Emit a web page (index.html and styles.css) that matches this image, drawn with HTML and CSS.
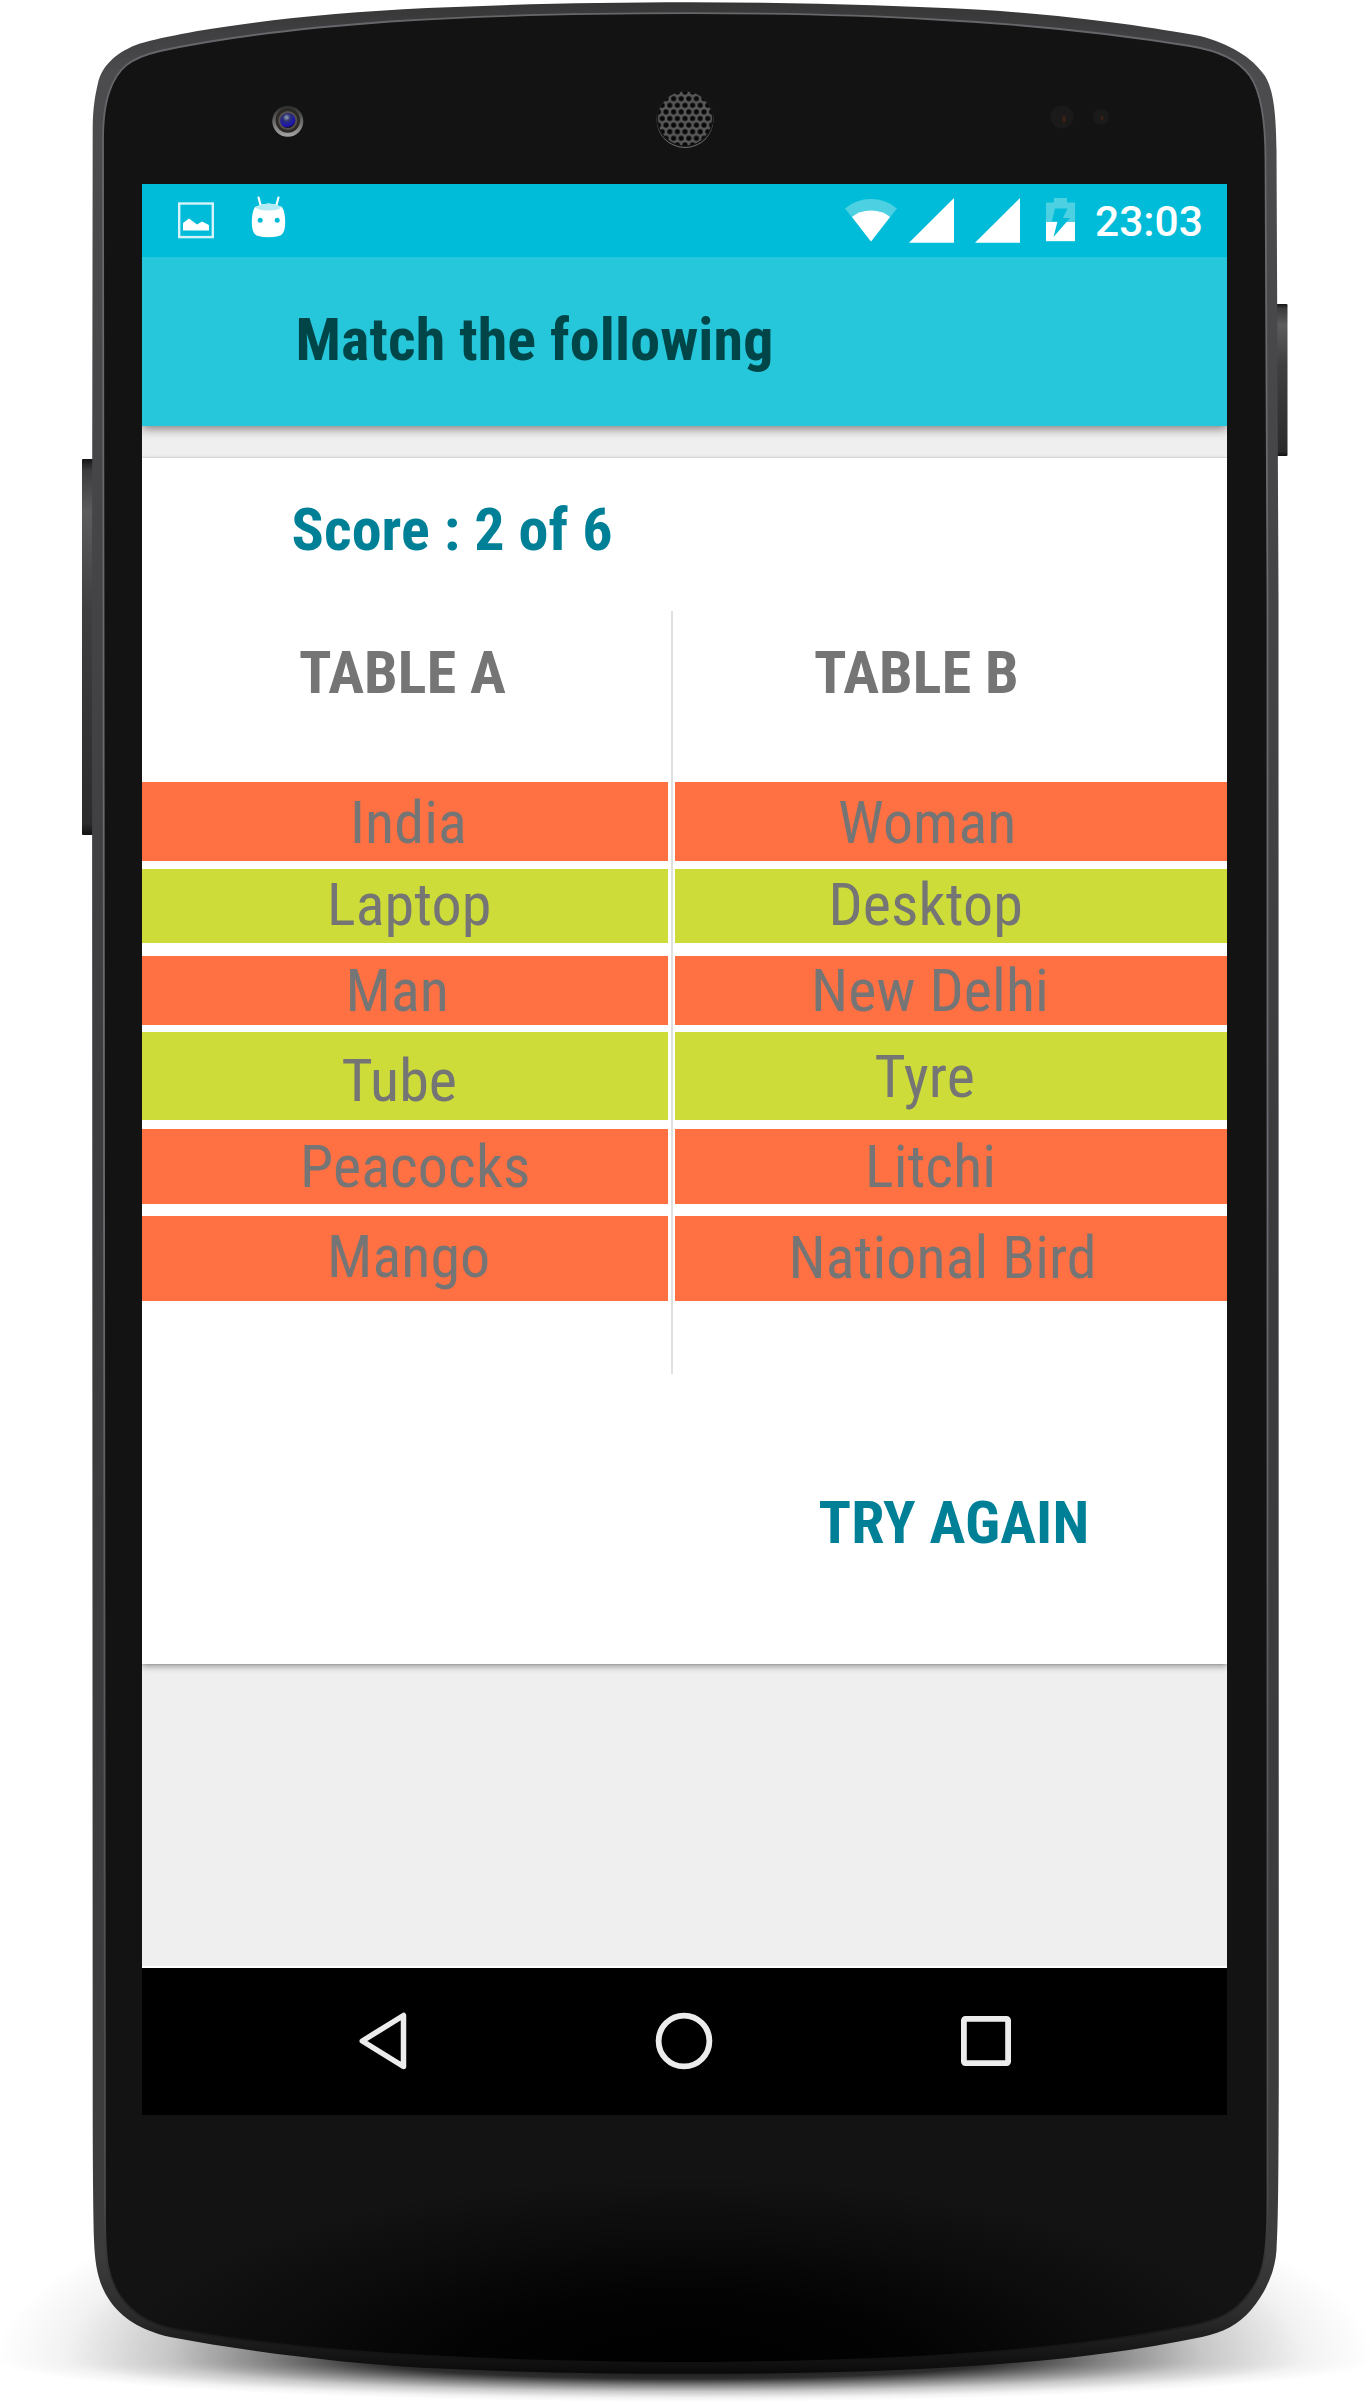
FILE: index.html
```
<!DOCTYPE html>
<html lang="en">
<head>
<meta charset="utf-8">
<title>Match the following</title>
<link rel="stylesheet" href="styles.css">
</head>
<body>
<div class="device">
  <svg class="device-frame" viewBox="0 0 1370 2405" aria-hidden="true">
    <defs>
      <radialGradient id="floor" cx=".5" cy=".5" r=".5">
        <stop offset="0" stop-color="#000" stop-opacity="1"/>
        <stop offset=".45" stop-color="#000" stop-opacity=".82"/>
        <stop offset=".6" stop-color="#000" stop-opacity=".5"/>
        <stop offset=".75" stop-color="#000" stop-opacity=".22"/>
        <stop offset=".9" stop-color="#000" stop-opacity=".05"/>
        <stop offset="1" stop-color="#000" stop-opacity="0"/>
      </radialGradient>
      <linearGradient id="rim" x1="0" y1="0" x2="0" y2="1">
        <stop offset="0" stop-color="#363637"/>
        <stop offset=".03" stop-color="#4c4c4f"/>
        <stop offset=".5" stop-color="#3b3b3e"/>
        <stop offset=".95" stop-color="#3c3c3d"/>
        <stop offset=".975" stop-color="#2c2c2c"/>
        <stop offset="1" stop-color="#0a0a0a"/>
      </linearGradient>
      <linearGradient id="edge" x1="0" y1="0" x2="0" y2="1">
        <stop offset="0" stop-color="#66666a"/>
        <stop offset=".5" stop-color="#6a6a70"/>
        <stop offset=".93" stop-color="#4a4a4c"/>
        <stop offset="1" stop-color="#101010"/>
      </linearGradient>
      <radialGradient id="shade" gradientUnits="userSpaceOnUse" cx="0" cy="0" r="1" gradientTransform="translate(685 2370) scale(580 195)">
        <stop offset="0" stop-color="#000"/>
        <stop offset=".4" stop-color="#000" stop-opacity=".85"/>
        <stop offset=".7" stop-color="#000" stop-opacity=".4"/>
        <stop offset="1" stop-color="#000" stop-opacity="0"/>
      </radialGradient>
      <linearGradient id="key" x1="0" y1="0" x2="0" y2="1">
        <stop offset="0" stop-color="#151515"/>
        <stop offset=".03" stop-color="#3c3c3c"/>
        <stop offset=".14" stop-color="#5c5c5c"/>
        <stop offset=".4" stop-color="#3f3f3f"/>
        <stop offset=".97" stop-color="#2b2b2b"/>
        <stop offset="1" stop-color="#111"/>
      </linearGradient>
      <linearGradient id="bezel" x1="0" y1="0" x2="0" y2="1">
        <stop offset="0" stop-color="#2a2a2a"/>
        <stop offset="1" stop-color="#a5a5a5"/>
      </linearGradient>
      <radialGradient id="lens" cx=".42" cy=".3" r=".7">
        <stop offset="0" stop-color="#9aa4b8"/>
        <stop offset=".35" stop-color="#2c3270"/>
        <stop offset=".8" stop-color="#1d12b8"/>
        <stop offset="1" stop-color="#111"/>
      </radialGradient>
      <pattern id="mesh" width="7.6" height="13.2" patternUnits="userSpaceOnUse" patternTransform="translate(681.2 111.9)">
        <rect width="7.6" height="13.2" fill="#585858"/>
        <circle cx="3.8" cy="6.6" r="2.6" fill="#090909"/>
        <circle cx="0" cy="0" r="2.6" fill="#090909"/>
        <circle cx="7.6" cy="0" r="2.6" fill="#090909"/>
        <circle cx="0" cy="13.2" r="2.6" fill="#090909"/>
        <circle cx="7.6" cy="13.2" r="2.6" fill="#090909"/>
      </pattern>
      <clipPath id="above"><rect x="0" y="2150" width="1370" height="210"/></clipPath>
      <clipPath id="below"><rect x="0" y="2360" width="1370" height="45"/></clipPath>
    </defs>
    <g clip-path="url(#above)"><ellipse cx="685" cy="2360" rx="690" ry="205" fill="url(#floor)"/></g>
    <g clip-path="url(#below)"><ellipse cx="685" cy="2360" rx="690" ry="42" fill="url(#floor)"/></g>
    <rect x="82" y="459" width="14" height="376" rx="1" fill="url(#key)"/>
    <rect x="1272" y="304" width="15.500" height="152" rx="1" fill="url(#key)"/>
    <path fill="url(#rim)" d="M92 600 L92.700 127 C93 107 95 96 98 83 C102 65 118 51 140 43.500 C190 29 300 14 427 8 C520 4 600 2.200 690 2.200 C790 2.200 890 5 976 9.500 C1070 15 1150 27 1200 36 C1230 44 1252 57 1265 76 C1272 88 1276 105 1276.500 150 L1278.500 600 L1278.800 2080 C1278.500 2160 1278.500 2220 1276.500 2250 C1275 2272 1266 2292 1251 2310 C1238 2325 1224 2332 1202 2337 C1130 2352 1060 2360 986 2365 C890 2372 790 2373.800 690 2373.800 C590 2373.800 510 2372 427 2368 C340 2363 250 2352 170 2337 C140 2330 122 2318 110 2301 C98 2284 95 2265 94 2240 C93 2200 92.700 2150 92.700 2080 Z"/>
    <path fill="#131313" stroke="url(#edge)" stroke-width="1.800" d="M103.500 600 L103 140 C103 120 105 103 110 90 C118 68 130 58 160 51 C220 38 300 28 390 21.500 C490 15 590 13.200 690 13.200 C780 13.200 860 15 935 19.500 C1020 24 1110 33 1190 46 C1220 51 1238 60 1250 76 C1261 92 1265.500 120 1265.500 160 L1267.500 600 L1267.500 2200 C1267.500 2255 1263 2276 1250 2292 C1236 2312 1220 2320 1190 2326 C1090 2346 940 2362 690 2363 C440 2362 280 2349 174 2329 C146 2323 132 2312 120 2296 C108 2278 105.500 2262 105 2220 Z"/>
    <path fill="url(#shade)" d="M107 2170 H1266 V2220 C1266 2255 1262 2276 1249 2292 C1236 2311 1220 2318 1190 2325 C1090 2345 940 2361 690 2362 C440 2361 280 2348 174 2328 C146 2322 132 2311 121 2296 C110 2278 107 2262 107 2220 Z"/>
    <circle cx="287.800" cy="121.200" r="15.500" fill="url(#bezel)"/>
    <circle cx="287.800" cy="120.500" r="12.200" fill="#2b2926"/>
    <circle cx="287.800" cy="120.500" r="9.600" fill="#55504c"/>
    <circle cx="287.800" cy="120.500" r="7.600" fill="url(#lens)"/>
    <circle cx="685" cy="119.500" r="28.500" fill="#6e6e6e"/>
    <circle cx="685" cy="118.500" r="28.500" fill="#161616"/>
    <circle cx="685" cy="118.500" r="27" fill="url(#mesh)"/>
    <circle cx="1062" cy="117" r="11.500" fill="#1b1a1a"/>
    <circle cx="1101" cy="117" r="8" fill="#1b1a1a"/>
    <ellipse cx="1064" cy="119" rx="1.800" ry="3.500" fill="#3a2016"/>
    <ellipse cx="1102" cy="118" rx="1.500" ry="2.500" fill="#3a2016"/>
  </svg>

  <main class="screen">
    <header class="status-bar">
      <div class="status-group">
        <svg width="36" height="72" viewBox="0 0 36 72"><rect x="1.200" y="19.500" width="33.600" height="33.600" fill="none" stroke="#d5f4f9" stroke-width="2.400"/><path d="M5 46.500V39l6-4.500 8 6 5-3 7 3.500v5.500z" fill="#fff"/></svg>
        <svg width="35" height="72" viewBox="0 0 35 72"><path d="M7.500 13.500l2.500 9M27.500 13.500l-2.500 9" stroke="#fff" stroke-width="2.200" stroke-linecap="round"/><path d="M4 23Q17.500 16 31 23q3.200 5 3.200 15 0 8-2.500 11.500Q29 53.300 17.500 53.300T3.300 49.500Q.8 46 .8 38 .8 28 4 23z" fill="#fff"/><path d="M4 23Q17.500 16 31 23q-3 3.500-13.500 3.500T4 23z" fill="#b5ebf3"/><circle cx="9.200" cy="36.200" r="2.500" fill="#00bcd8"/><circle cx="26.200" cy="36.200" r="2.500" fill="#00bcd8"/></svg>
      </div>
      <div class="status-group status-right">
        <svg class="wifi" width="52" height="72" viewBox="0 0 52 72"><path d="M26 57.500L0 24.500Q11 15 26 15t26 9.500z" fill="#4dd0e1"/><path d="M26 57.500L7 33Q14 26.500 26 26.500T45 33z" fill="#fff"/></svg>
        <svg class="signal" width="45" height="72" viewBox="0 0 45 72"><path d="M45 14v44.800H0z" fill="#fff"/></svg>
        <svg class="signal-two" width="45" height="72" viewBox="0 0 45 72"><path d="M45 14v44.800H0z" fill="#fff"/></svg>
        <svg class="battery" width="29" height="72" viewBox="0 0 29 72"><path d="M0 18.500h8V14h13v4.500h8V38H0z" fill="#4dd0e1"/><path d="M0 38h29v19.200H0z" fill="#fff"/><path d="M9 24.500h12.500l-4.500 9.500h7L7.500 53l4-15.500H5.800z" fill="#00bcd8"/></svg>
        <span class="clock">23:03</span>
      </div>
    </header>
    <div class="app-bar"><h1>Match the following</h1></div>
    <section class="card">
      <p class="score">Score : 2 of 6</p>
      <div class="tables">
        <div class="column column-a">
          <h2>TABLE A</h2>
          <div class="row r1 wrong a1">India</div>
          <div class="row r2 right a2">Laptop</div>
          <div class="row r3 wrong a3">Man</div>
          <div class="row r4 right a4">Tube</div>
          <div class="row r5 wrong a5">Peacocks</div>
          <div class="row r6 wrong a6">Mango</div>
        </div>
        <div class="divider"></div>
        <div class="column column-b">
          <h2>TABLE B</h2>
          <div class="row r1 wrong b1">Woman</div>
          <div class="row r2 right b2">Desktop</div>
          <div class="row r3 wrong b3">New Delhi</div>
          <div class="row r4 right b4">Tyre</div>
          <div class="row r5 wrong b5">Litchi</div>
          <div class="row r6 wrong b6">National Bird</div>
        </div>
      </div>
      <div class="retry">TRY AGAIN</div>
    </section>
    <nav class="nav-bar">
      <svg width="48" height="58" viewBox="0 0 48 58"><path d="M44.500 3.500v51L3.300 29z" fill="none" stroke="#ececec" stroke-width="5.500" stroke-linejoin="round"/></svg>
      <svg width="58" height="58" viewBox="0 0 58 58"><circle cx="29" cy="29" r="25.400" fill="none" stroke="#ececec" stroke-width="5.800"/></svg>
      <svg width="50" height="58" viewBox="0 0 50 58"><rect x="2.900" y="6.900" width="44.200" height="44.200" rx="1.500" fill="none" stroke="#ececec" stroke-width="5.800"/></svg>
    </nav>
  </main>
</div>
</body>
</html>
```
FILE: styles.css
```
* { box-sizing: border-box; }
body { margin: 0; background: #fff; font-family: "Roboto Condensed", Roboto, sans-serif; }
h1, h2, p { margin: 0; }
svg { display: block; }

.device { position: relative; width: 1370px; height: 2405px; padding: 184px 143px 290px 142px; overflow: hidden; }
.device-frame { position: absolute; inset: 0; width: 1370px; height: 2405px; }

.screen { position: relative; display: flex; flex-direction: column; height: 1931px; background: #efefef; overflow: hidden; font-size: 60px; letter-spacing: .1px; }

.status-bar { position: relative; z-index: 1; display: flex; justify-content: space-between; height: 72.500px; background: #00bcd8; padding: 0 24px 0 35.500px; letter-spacing: 0; }
.status-group { display: flex; gap: 37px; }
.status-right { gap: 0; }
.signal { margin-left: 12px; }
.signal-two { margin-left: 21px; }
.battery { margin-left: 25.500px; }
.clock { width: 108px; margin-left: 20.500px; font: 500 42.500px/76px Roboto, sans-serif; color: #fff; white-space: nowrap; }

.app-bar { position: relative; height: 169px; padding-left: 153.500px; background: #26c6db; box-shadow: 0 3px 9px rgba(40, 20, 20, .5); }
.app-bar h1 { font-size: 60px; font-weight: 700; line-height: 166px; color: #004649; }

.card { height: 1206px; margin-top: 32.500px; background: #fff; box-shadow: 0 0 2px rgba(0, 0, 0, .2), 0 3px 6px rgba(0, 0, 0, .32); }
.score { height: 153px; padding-left: 149.500px; font-weight: 700; line-height: 143px; color: #008097; }

.tables { display: flex; height: 763px; color: #757575; white-space: nowrap; }
.column-a { width: 526px; }
.column-b { width: 552px; }
.divider { width: 2px; margin: 0 2px 0 3px; background: #e0e0e0; }
h2 { height: 171.300px; font-size: 60px; font-weight: 700; line-height: 123px; }
.column-a h2 { padding-left: 157px; }
.column-b h2 { padding-left: 139px; }

.wrong { background: #ff7043; }
.right { background: #cddc39; }
.r1 { height: 78.700px; line-height: 82px; }
.r2 { height: 74px; margin-top: 8.500px; line-height: 71px; }
.r3 { height: 69.300px; margin-top: 12.200px; line-height: 70px; }
.r4 { height: 87.400px; margin-top: 7.300px; line-height: 97px; }
.r5 { height: 75.300px; margin-top: 9.300px; line-height: 76px; }
.r6 { height: 84.500px; margin-top: 12.200px; line-height: 82px; }

.a1 { padding-left: 208px; }
.a2 { padding-left: 185px; }
.a3 { padding-left: 203.500px; }
.a4 { padding-left: 199.500px; }
.a5 { padding-left: 158px; }
.a6 { padding-left: 185px; }
.b1 { padding-left: 163px; }
.b2 { padding-left: 153.500px; }
.b3 { padding-left: 136px; }
.b4 { padding-left: 199.500px; line-height: 89px; }
.b5 { padding-left: 190px; }
.b6 { padding-left: 113.500px; line-height: 84px; }

.retry { padding: 99px 0 0 676.500px; font-weight: 700; line-height: 99px; color: #008097; }

.nav-bar { display: flex; justify-content: space-between; align-items: center; height: 149px; margin-top: auto; padding: 0 216px 2px 217px; background: #000; border-top: 2px solid #fff; }
```
